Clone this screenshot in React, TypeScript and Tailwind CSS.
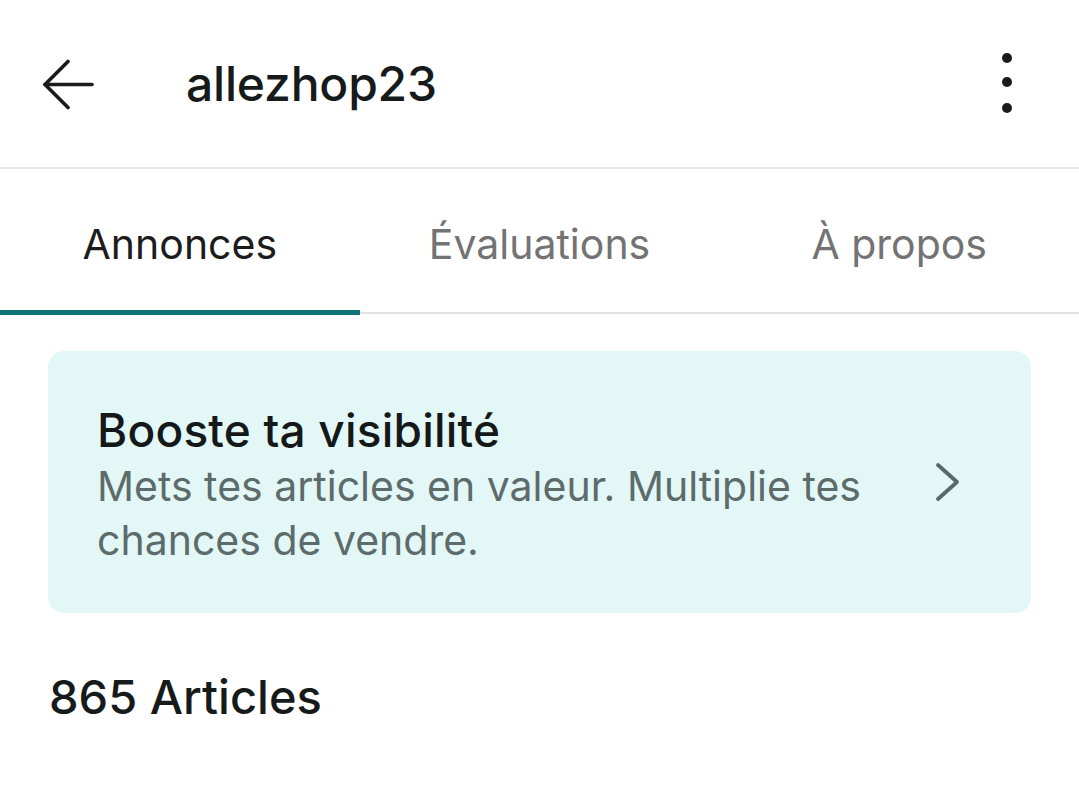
function BackArrow() {
  return (
    <svg width="52" height="52" viewBox="0 0 52 52" fill="none" stroke="#1b1b1b" strokeWidth="3.6" strokeLinecap="round" strokeLinejoin="round">
      <path d="M2 26.5 L49 26.5" />
      <path d="M25 3.5 L2 26.5 L25 49.5" />
    </svg>
  );
}

function MoreDots() {
  return (
    <svg width="12" height="62" viewBox="0 0 12 62" fill="#1b1b1b">
      <circle cx="6" cy="5" r="5" />
      <circle cx="6" cy="29" r="5" />
      <circle cx="6" cy="55" r="5" />
    </svg>
  );
}

function Chevron() {
  return (
    <svg width="26" height="40" viewBox="0 0 26 40" fill="none" stroke="#5b6868" strokeWidth="3.8" strokeLinecap="round" strokeLinejoin="round">
      <path d="M3 3 L22 20 L3 37" />
    </svg>
  );
}

const tabs = ["Annonces", "Évaluations", "À propos"];

export default function App() {
  return (
    <div className="h-[810px] w-[1079px] overflow-hidden bg-white font-['Inter',sans-serif] text-[#171a1a]">
      <header className="flex h-[169px] items-center border-b-2 border-[#e6e6e6] pr-[66px]">
        <div className="ml-[43px] flex h-[60px] w-[52px] items-center">
          <BackArrow />
        </div>
        <h1 className="ml-[91px] text-[48px] font-medium tracking-[-0.2px]">allezhop23</h1>
        <div className="ml-auto flex items-center">
          <MoreDots />
        </div>
      </header>

      <nav className="flex h-[146px]">
        {tabs.map((tab, i) => (
          <div key={tab} className="flex flex-1 flex-col">
            <div
              className={
                i === 0
                  ? "flex flex-1 items-center justify-center pt-[10px] text-[41px] text-[#1c1c1c]"
                  : "flex flex-1 items-center justify-center pt-[10px] text-[41px] text-[#737373]"
              }
            >
              {tab}
            </div>
            {i === 0 ? (
              <div className="h-[5px] bg-[#10737a]" />
            ) : (
              <div className="mb-[1px] mt-[2px] h-[2px] bg-[#e2e2e2]" />
            )}
          </div>
        ))}
      </nav>

      <div className="mx-[48px] mt-[36px] flex h-[262px] items-center rounded-[16px] bg-[#e3f7f7] pl-[49px] pr-[70px]">
        <div className="w-[800px] pt-[5px]">
          <p className="text-[46px] font-medium leading-[54px] tracking-[0.2px] text-[#151818]">Booste ta visibilité</p>
          <p className="mt-[2px] text-[41px] leading-[54px] text-[#5d6b6b]">
            Mets tes articles en valeur. Multiplie tes chances de vendre.
          </p>
        </div>
        <div className="ml-auto flex items-center">
          <Chevron />
        </div>
      </div>

      <p className="ml-[49px] mt-[57px] text-[47px] font-medium leading-[54px] text-[#171a1a]">865 Articles</p>
    </div>
  );
}
